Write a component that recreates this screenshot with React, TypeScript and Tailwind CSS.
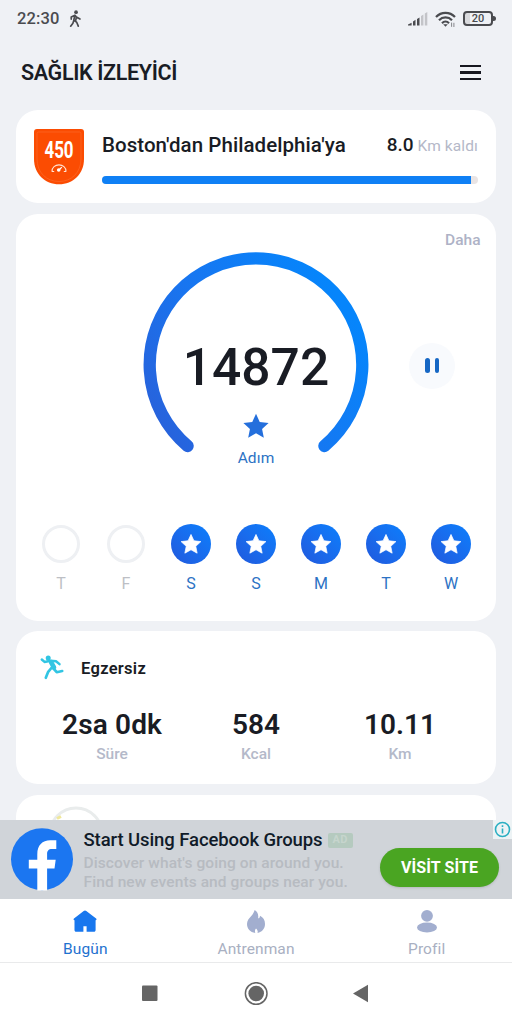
import React from 'react';

const STAR = 'M12 1.6l3.2 6.9 7.6.9-5.6 5.1 1.5 7.5L12 18.3 5.3 22l1.5-7.5L1.2 9.4l7.6-.9z';

const days = [
  { label: 'T', done: false },
  { label: 'F', done: false },
  { label: 'S', done: true },
  { label: 'S', done: true },
  { label: 'M', done: true },
  { label: 'T', done: true },
  { label: 'W', done: true },
];

const stats = [
  { value: '2sa 0dk', label: 'Süre', tracking: 'tracking-[0.15px]' },
  { value: '584', label: 'Kcal', tracking: 'tracking-normal' },
  { value: '10.11', label: 'Km', tracking: 'tracking-normal' },
];

const StatusBar = () => (
  <div className="flex h-[38px] items-center justify-between pl-[17px] pr-4 text-[#4a4b4f]">
    <div className="flex items-center gap-2.5">
      <span className="text-[16.5px] font-medium leading-5 tracking-[0.1px]">22:30</span>
      <svg width="13" height="18" viewBox="0 0 14 19" fill="none" stroke="currentColor" strokeWidth="1.8" strokeLinecap="round" strokeLinejoin="round">
        <circle cx="7.6" cy="2.2" r="2" fill="currentColor" stroke="none" />
        <path d="M2.4 9.6V7.4L6.4 5.4l1.6 2 3.8 2.2M6.2 5.8L5.2 10.6l3.2 2.6 1.6 4M5.2 10.8L4.2 14l-2.4 3.2M7.9 7.4l-.7 3.8" />
      </svg>
    </div>
    <div className="flex items-center gap-[7px]">
      <svg width="21" height="16" viewBox="0 0 21 16">
        <path d="M1 14.5v-1l3.6-1.7v2.7zM6 14.5v-4l2.5-1.7v5.7zM10 14.5V8.1l2.5-1.7v8.1z" fill="#4a4b4f" />
        <path d="M14 14.5V5.1l2.4-1.6v11zM17.8 14.5v-12L20.300 1v13.5z" fill="#c3c4c8" />
      </svg>
      <svg width="21" height="17" viewBox="0 0 21 17" fill="none" stroke="currentColor" strokeWidth="2.2">
        <path d="M1 6C6.2.5 14.8.5 20 6M4 9.2c3.6-3.7 9.4-3.7 13 0M7 12.2c2-2 5-2 7 0" />
        <path d="M8.2 13.3h4.6l-2.300 2.4z" fill="currentColor" stroke="none" />
        <path d="M16.6 11.6v4.2M18.9 11.8V16" strokeWidth="1" stroke="#85868a" />
      </svg>
      <div className="flex items-center pb-px">
        <div className="flex h-[15px] w-[30px] items-center justify-center rounded-[4px] border-2 border-[#4a4b4f] bg-gradient-to-r from-[#d9dadd] from-20% to-transparent to-20% text-[11px] font-medium leading-none">20</div>
        <div className="h-[5px] w-[3px] rounded-r-sm bg-[#4a4b4f]" />
      </div>
    </div>
  </div>
);

const Header = () => (
  <header className="flex h-[72px] items-center justify-between pl-[21px] pr-[31px]">
    <h1 className="pb-px text-[21.5px] font-semibold tracking-[-0.35px]">SAĞLIK İZLEYİCİ</h1>
    <div className="flex flex-col gap-[4.5px] pb-[3px]">
      <div className="h-[2.2px] w-[21px] bg-[#16171f]" />
      <div className="h-[2.2px] w-[21px] bg-[#16171f]" />
      <div className="h-[2.2px] w-[21px] bg-[#16171f]" />
    </div>
  </header>
);

const RouteBadge = () => (
  <div className="relative h-14 w-[50px]">
    <svg width="50" height="56" viewBox="0 0 50 56">
      <path d="M3 0h44a3 3 0 013 3v27c0 15-11 25.3-25 25.3S0 45 0 30V3a3 3 0 013-3z" fill="#fb4c02" />
      <path d="M4.500 3h41A1.500 1.500 0 0147 4.500V30c0 13.500-9.500 22.500-22 22.500S3 43.500 3 30V4.500A1.500 1.500 0 014.500 3z" fill="none" stroke="#fd6524" strokeWidth=".8" />
      <path d="M18 42.800c-.6-9.200 14.600-9.200 14 0M18 42.500h2.200M29.800 42.500H32" fill="none" stroke="#ffe3d3" strokeWidth="1.1" />
      <circle cx="24.700" cy="41" r="1.8" fill="#fff" />
      <path d="M25 41l2.800-2.800" stroke="#fff" strokeWidth="1.2" />
    </svg>
    <span className="absolute left-1/2 top-1.5 -translate-x-1/2 scale-x-[.69] text-[24.5px] font-bold leading-[29px] text-white">450</span>
  </div>
);

const RouteCard = () => (
  <section className="flex h-[93px] shrink-0 rounded-[22px] bg-white px-[18px] pt-[19px]">
    <RouteBadge />
    <div className="ml-[18px] flex-1">
      <div className="flex h-8 items-center justify-between whitespace-nowrap">
        <span className="text-[20.5px] font-medium tracking-[0.05px]">Boston'dan Philadelphia'ya</span>
        <span className="flex items-baseline gap-1">
          <span className="text-[19px] font-medium">8.0</span>
          <span className="text-[15.5px] tracking-[0.1px] text-[#b4b8c8]">Km kaldı</span>
        </span>
      </div>
      <div className="mt-[15px] h-2 overflow-hidden rounded-full bg-[#e9e4e4]">
        <div className="h-full w-[369px] bg-[#0f80f5]" />
      </div>
    </div>
  </section>
);

const StepRing = () => (
  <div className="relative mx-auto h-[214px] w-[226px]">
    <svg className="absolute inset-0" width="226" height="214" viewBox="0 0 226 214">
      <defs>
        <linearGradient id="ring" x1="0" y1="1" x2="1" y2="0.4">
          <stop offset="0" stopColor="#2a5fd8" />
          <stop offset="0.5" stopColor="#1875f0" />
          <stop offset="1" stopColor="#0685fb" />
        </linearGradient>
      </defs>
      <path d="M44.600 194A106.300 106.300 0 1 1 181.400 194" fill="none" stroke="url(#ring)" strokeWidth="12.3" strokeLinecap="round" />
    </svg>
    <div className="relative flex flex-col items-center pt-[85px]">
      <span className="text-[51.5px] font-medium leading-[62px]">14872</span>
      <svg className="mt-[13px]" width="28" height="28" viewBox="0 0 24 24">
        <path d={STAR} fill="#246fdc" />
      </svg>
      <span className="mt-2 text-[15.5px] leading-5 tracking-[0.1px] text-[#2c72c4]">Adım</span>
    </div>
  </div>
);

const StepsCard = () => (
  <section className="mt-[10.5px] h-[407px] shrink-0 rounded-[22px] bg-white">
    <div className="flex h-[38px] justify-end pr-[15.5px] pt-4 text-[15.5px] font-medium leading-5 text-[#aeb2c6]">Daha</div>
    <div className="grid grid-cols-[1fr_226px_1fr]">
      <div />
      <StepRing />
      <button className="ml-[40px] mt-3.5 flex h-[46px] w-[46px] items-center justify-center gap-[5px] self-center rounded-full bg-[#f8fafd]">
        <span className="h-[15px] w-[4.5px] rounded-full bg-[#1667c4]" />
        <span className="h-[15px] w-[4.5px] rounded-full bg-[#1667c4]" />
      </button>
    </div>
    <div className="mt-[58px] grid grid-cols-7 px-[12.5px]">
      {days.map((day, i) => (
        <div key={i} className="flex flex-col items-center gap-2.5">
          {day.done ? (
            <div className="flex h-10 w-10 items-center justify-center rounded-full bg-gradient-to-tr from-[#2059dd] to-[#087ffd]">
              <svg width="22" height="22" viewBox="0 0 24 24">
                <path d={STAR} fill="#fff" stroke="#fff" strokeWidth=".8" strokeLinejoin="round" />
              </svg>
            </div>
          ) : (
            <div className="flex h-10 w-10 items-center justify-center">
              <div className="h-[38px] w-[38px] rounded-full border-[3px] border-[#eef0f3]" />
            </div>
          )}
          <span className={`text-base leading-5 ${day.done ? 'text-[#2c72c4]' : 'text-[#bdbfc5]'}`}>{day.label}</span>
        </div>
      ))}
    </div>
  </section>
);

const Runner = () => (
  <svg width="24" height="25" viewBox="0 0 24 25" fill="none" stroke="#31c5e3" strokeLinecap="round" strokeLinejoin="round">
    <circle cx="8.2" cy="3" r="2.5" fill="#31c5e3" stroke="none" />
    <path d="M1.800 4.500l2.700 2.400 6-1.100 5.500.4 3.500 2.900" strokeWidth="2.5" />
    <path d="M11 7.200l3 5.300" strokeWidth="4.6" />
    <path d="M13.500 13.500l3.200 3.700 5.500-1.200M11.800 12.500l-3.600 4.300-2.400 6" strokeWidth="2.7" />
  </svg>
);

const ExerciseCard = () => (
  <section className="mt-[10.5px] h-[153px] shrink-0 rounded-[22px] bg-white">
    <div className="flex items-center gap-[17px] pl-6 pt-6">
      <Runner />
      <h2 className="pt-[3px] text-[16.5px] font-semibold leading-5 tracking-[0.3px]">Egzersiz</h2>
    </div>
    <div className="mt-[26px] grid grid-cols-3 px-6">
      {stats.map((stat) => (
        <div key={stat.label} className="flex flex-col items-center whitespace-nowrap">
          <span className={`text-[28px] font-semibold leading-[38px] ${stat.tracking}`}>{stat.value}</span>
          <span className="text-[15.5px] font-medium leading-5 text-[#b4b9c9]">{stat.label}</span>
        </div>
      ))}
    </div>
  </section>
);

const NextCard = () => (
  <section className="mt-[10.5px] h-40 shrink-0 rounded-[22px] bg-white pl-[33px] pt-[11px]">
    <svg width="56" height="56" viewBox="0 0 56 56" fill="none">
      <circle cx="27" cy="28" r="26" stroke="#e9ecec" strokeWidth="3" />
      <path d="M8 12.500l4-2" stroke="#f0e89a" strokeWidth="3" />
    </svg>
  </section>
);

const AdBanner = () => (
  <aside className="relative flex h-[79px] shrink-0 bg-[#d0d4d9] pl-[11px] pr-[13px]">
    <svg className="mt-2" width="62" height="63" viewBox="0 0 62 63">
      <circle cx="31" cy="31.2" r="31" fill="#1b76f1" />
      <path d="M26.300 62.500V40.500h-8.500v-8.700h8.500v-5.500c0-9 5-14 13-14h6v8.600h-4.200c-3.800 0-5 2-5 5.200v5.700h8.600l-1.200 8.700h-7.400v22z" fill="#fff" />
    </svg>
    <div className="ml-[10.5px] flex-1 whitespace-nowrap pt-2.5">
      <div className="flex items-center gap-[5px]">
        <span className="text-[18.5px] font-medium leading-[21px] tracking-[-0.09px] text-[#101b29]">Start Using Facebook Groups</span>
        <span className="flex h-[15px] w-[25px] items-center justify-center rounded-[2px] bg-[#b5cabf] text-[11px] font-bold tracking-wide text-[#c6d5cd]">AD</span>
      </div>
      <p className="mt-[3px] text-[15.5px] font-medium leading-[18.5px] tracking-[0.09px] text-[#b7bbc1]">
        Discover what's going on around you.
        <br />
        Find new events and groups near you.
      </p>
    </div>
    <button className="mt-7 h-[39px] w-[119px] rounded-full bg-[#4aa522] text-base font-bold tracking-[0.1px] text-white shadow">VİSİT SİTE</button>
    <div className="absolute right-0 top-0 flex h-[19px] w-[19px] items-center justify-center bg-[#edf3f5]">
      <svg width="17" height="17" viewBox="0 0 17 17" fill="none" stroke="#2bafc2" strokeWidth="1.6">
        <circle cx="8.5" cy="8.5" r="7" />
        <path d="M8.500 7.500v5M8.500 4.200v1.700" />
      </svg>
    </div>
  </aside>
);

const TabBar = () => (
  <nav className="grid h-[64px] shrink-0 grid-cols-3 border-b border-[#e9eaeb] bg-white pt-[9px] text-[15.5px] leading-5 text-[#a9b0c2]">
    <div className="flex flex-col items-center gap-[5px] text-[#1f72cf]">
      <svg width="24" height="26" viewBox="0 0 24 26">
        <path d="M12 2.600c.5 0 .9.200 1.300.5l9.800 7.500c.8.600.5 1.600-.5 1.600V22c0 1.200-.7 1.800-1.700 1.800h-7.300v-5.500h-3.200v5.500H3.200c-1 0-1.700-.6-1.700-1.800v-9.800c-1 0-1.300-1-.5-1.600l9.700-7.500c.4-.3.8-.5 1.300-.5z" fill="#1877ee" />
      </svg>
      <span className="tracking-[0.15px]">Bugün</span>
    </div>
    <div className="flex flex-col items-center gap-[5px]">
      <svg width="24" height="26" viewBox="0 0 24 26">
        <path d="M10.700 2c3 1.800 4 4.800 3.400 8.200 1 .1 1.700-.4 1.900-2.500 3.300 1.500 5 4.600 5 8.200 0 4.500-2.800 8-7.500 9 .5-1.700.2-2.800-1.500-4.500-1.300 1.500-1.300 2.800-.7 4.500C6.200 24.300 3 20.800 3 16c0-3.500 2-5.700 4.500-8.300C9 6 10 4.200 10.700 2z" fill="#a2aecf" />
      </svg>
      <span className="tracking-[0.1px]">Antrenman</span>
    </div>
    <div className="flex flex-col items-center gap-[5px]">
      <svg width="24" height="26" viewBox="0 0 24 26" fill="#a2aecf">
        <circle cx="12" cy="7.8" r="5.9" />
        <ellipse cx="12" cy="19.5" rx="10" ry="5" />
      </svg>
      <span className="tracking-[0.1px]">Profil</span>
    </div>
  </nav>
);

const SystemNav = () => (
  <div className="flex h-[61px] shrink-0 items-center bg-white pl-[142px]">
    <svg width="228" height="24" viewBox="0 0 228 24" fill="#656565">
      <rect x="0" y="3.5" width="15.5" height="15.5" rx="1" />
      <circle cx="114.2" cy="11.5" r="7.8" />
      <circle cx="114.2" cy="11.5" r="10.8" fill="none" stroke="#656565" strokeWidth="1.5" />
      <path d="M211 11.500l15-8.800v17.600z" />
    </svg>
  </div>
);

const App = () => (
  <div className="flex h-[1024px] w-[512px] flex-col overflow-hidden bg-[#eff1f5] font-['Roboto',sans-serif] text-[#191c24]">
    <StatusBar />
    <Header />
    <main className="flex min-h-0 flex-1 flex-col overflow-hidden px-4">
      <RouteCard />
      <StepsCard />
      <ExerciseCard />
      <NextCard />
    </main>
    <AdBanner />
    <TabBar />
    <SystemNav />
  </div>
);

export default App;
